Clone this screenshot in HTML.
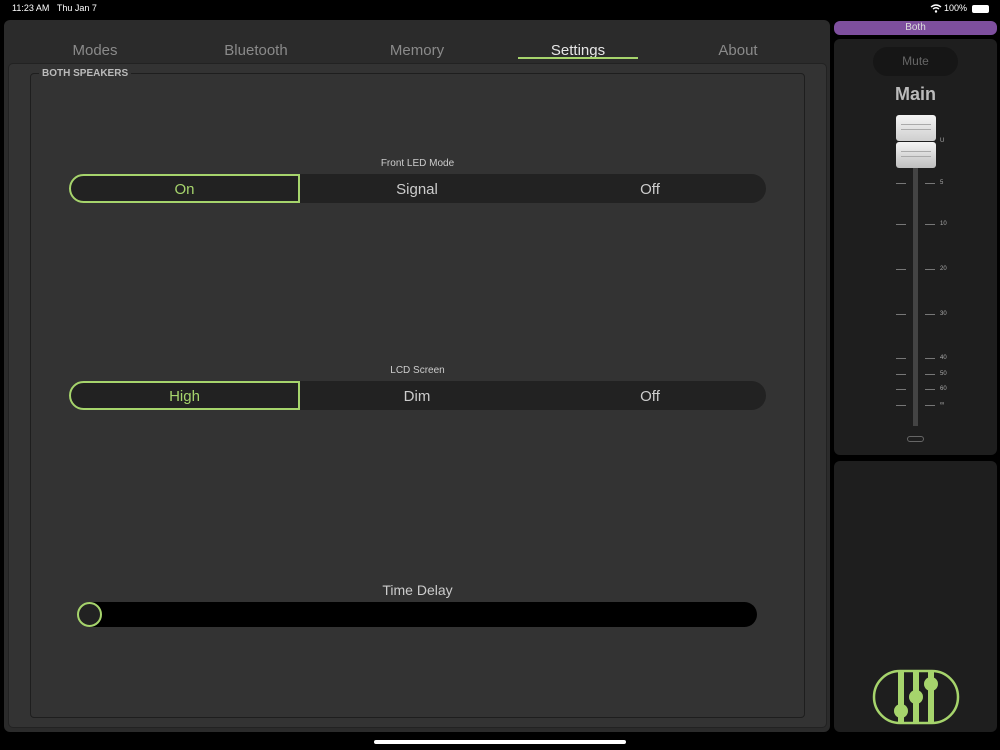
<!DOCTYPE html>
<html><head><style>
*{margin:0;padding:0;box-sizing:border-box}
body{width:1000px;height:750px;background:#000;font-family:"Liberation Sans",sans-serif;position:relative;overflow:hidden;color:#ccc}
.a{position:absolute}
.tab{position:absolute;top:42px;font-size:15px;color:#8a8a8a;text-align:center;width:140px}
.seg{position:absolute;left:69px;width:697px;height:29px;background:#222;border-radius:15px;font-size:15px;color:#ccc}
.seg span{position:absolute;top:7px;width:232px;text-align:center}
.sel{position:absolute;left:0;top:0;width:231px;height:29px;border:2px solid #a6d46c;border-radius:15px 0 0 15px;color:#a6d46c;text-align:center;line-height:27px}
.lab{position:absolute;width:697px;left:69px;text-align:center;font-size:10px;color:#ccc}
.tk{position:absolute;height:1px;width:10px;background:#777}
.tl{position:absolute;font-size:6px;color:#aaa;left:940px}
</style></head><body>
<div class="a" style="left:12px;top:3px;font-size:9px;color:#fff">11:23 AM&nbsp;&nbsp;&nbsp;Thu Jan 7</div>
<div class="a" style="left:944px;top:3px;font-size:9px;color:#fff">100%</div>
<div class="a" style="left:972px;top:5px;width:17px;height:8px;border:1px solid #fff;border-radius:2px;background:#fff"></div>
<svg class="a" style="left:930px;top:4px" width="12" height="9"><path d="M1 3Q6 -1 11 3M3 5Q6 2.5 9 5" stroke="#fff" stroke-width="1.4" fill="none"/><circle cx="6" cy="7.5" r="1.2" fill="#fff"/></svg>

<div class="a" style="left:4px;top:20px;width:826px;height:712px;background:#2b2b2b;border-radius:6px"></div>
<div class="tab" style="left:25px">Modes</div>
<div class="tab" style="left:186px">Bluetooth</div>
<div class="tab" style="left:347px">Memory</div>
<div class="tab" style="left:508px;color:#e6e6e6">Settings</div>
<div class="a" style="left:518px;top:57px;width:120px;height:2px;background:#a6d46c"></div>
<div class="tab" style="left:668px">About</div>
<div class="a" style="left:8px;top:63px;width:819px;height:665px;background:#333;border:1px solid #222;border-radius:5px"></div>
<div class="a" style="left:30px;top:73px;width:775px;height:645px;border:1px solid #1e1e1e;border-radius:4px"></div>
<div class="a" style="left:39px;top:68px;padding:0 3px;background:#333;font-size:10px;font-weight:bold;color:#bbb">BOTH SPEAKERS</div>

<div class="lab" style="top:158px">Front LED Mode</div>
<div class="seg" style="top:174px"><div class="sel">On</div><span style="left:232px">Signal</span><span style="left:465px">Off</span></div>
<div class="lab" style="top:365px">LCD Screen</div>
<div class="seg" style="top:381px"><div class="sel">High</div><span style="left:232px">Dim</span><span style="left:465px">Off</span></div>
<div class="lab" style="top:582px;font-size:14px">Time Delay</div>
<div class="a" style="left:78px;top:602px;width:679px;height:25px;background:#000;border-radius:13px"></div>
<div class="a" style="left:77px;top:602px;width:25px;height:25px;border:2px solid #a6d46c;border-radius:50%;background:#222"></div>

<div class="a" style="left:834px;top:21px;width:163px;height:14px;background:#7e4f9e;border-radius:6px;font-size:10px;color:#ddd;text-align:center;line-height:14px">Both</div>
<div class="a" style="left:834px;top:39px;width:163px;height:416px;background:#1e1e1e;border-radius:6px"></div>
<div class="a" style="left:873px;top:47px;width:85px;height:29px;background:#161616;border-radius:15px;font-size:12px;color:#666;text-align:center;line-height:29px">Mute</div>
<div class="a" style="left:834px;top:84px;width:163px;text-align:center;font-size:18px;font-weight:bold;color:#bbb">Main</div>
<div class="a" style="left:913px;top:168px;width:5px;height:258px;background:#444"></div>
<div class="a" style="left:896px;top:115px;width:40px;height:26px;background:linear-gradient(#f4f4f4,#cfcfcf);border-radius:3px"><div style="margin:9px 5px 0;height:1px;background:#aaa"></div><div style="margin:4px 5px 0;height:1px;background:#aaa"></div></div>
<div class="a" style="left:896px;top:142px;width:40px;height:26px;background:linear-gradient(#f4f4f4,#bfbfbf);border-radius:3px"><div style="margin:9px 5px 0;height:1px;background:#aaa"></div><div style="margin:4px 5px 0;height:1px;background:#aaa"></div></div>
<div class="tl" style="top:138px">U</div>
<div class="tk" style="left:896px;top:183px"></div><div class="tk" style="left:925px;top:183px"></div><div class="tl" style="top:180px">5</div>
<div class="tk" style="left:896px;top:224px"></div><div class="tk" style="left:925px;top:224px"></div><div class="tl" style="top:221px">10</div>
<div class="tk" style="left:896px;top:269px"></div><div class="tk" style="left:925px;top:269px"></div><div class="tl" style="top:266px">20</div>
<div class="tk" style="left:896px;top:314px"></div><div class="tk" style="left:925px;top:314px"></div><div class="tl" style="top:311px">30</div>
<div class="tk" style="left:896px;top:358px"></div><div class="tk" style="left:925px;top:358px"></div><div class="tl" style="top:355px">40</div>
<div class="tk" style="left:896px;top:374px"></div><div class="tk" style="left:925px;top:374px"></div><div class="tl" style="top:371px">50</div>
<div class="tk" style="left:896px;top:389px"></div><div class="tk" style="left:925px;top:389px"></div><div class="tl" style="top:386px">60</div>
<div class="tk" style="left:896px;top:405px"></div><div class="tk" style="left:925px;top:405px"></div><div class="tl" style="top:401px">∞</div>
<div class="a" style="left:907px;top:436px;width:17px;height:6px;border:1px solid #666;border-radius:3px"></div>

<div class="a" style="left:834px;top:461px;width:163px;height:271px;background:#1e1e1e;border-radius:6px"></div>
<svg class="a" style="left:872px;top:669px" width="88" height="56">
<rect x="2" y="2" width="84" height="52" rx="26" fill="none" stroke="#a6d46c" stroke-width="2.5"/>
<rect x="26" y="2" width="6" height="52" fill="#a6d46c"/>
<rect x="41" y="2" width="6" height="52" fill="#a6d46c"/>
<rect x="56" y="2" width="6" height="52" fill="#a6d46c"/>
<circle cx="29" cy="42" r="7" fill="#a6d46c"/><circle cx="44" cy="28" r="7" fill="#a6d46c"/><circle cx="59" cy="15" r="7" fill="#a6d46c"/>
</svg>
<div class="a" style="left:374px;top:740px;width:252px;height:4px;background:#fff;border-radius:2px"></div>
</body></html>
